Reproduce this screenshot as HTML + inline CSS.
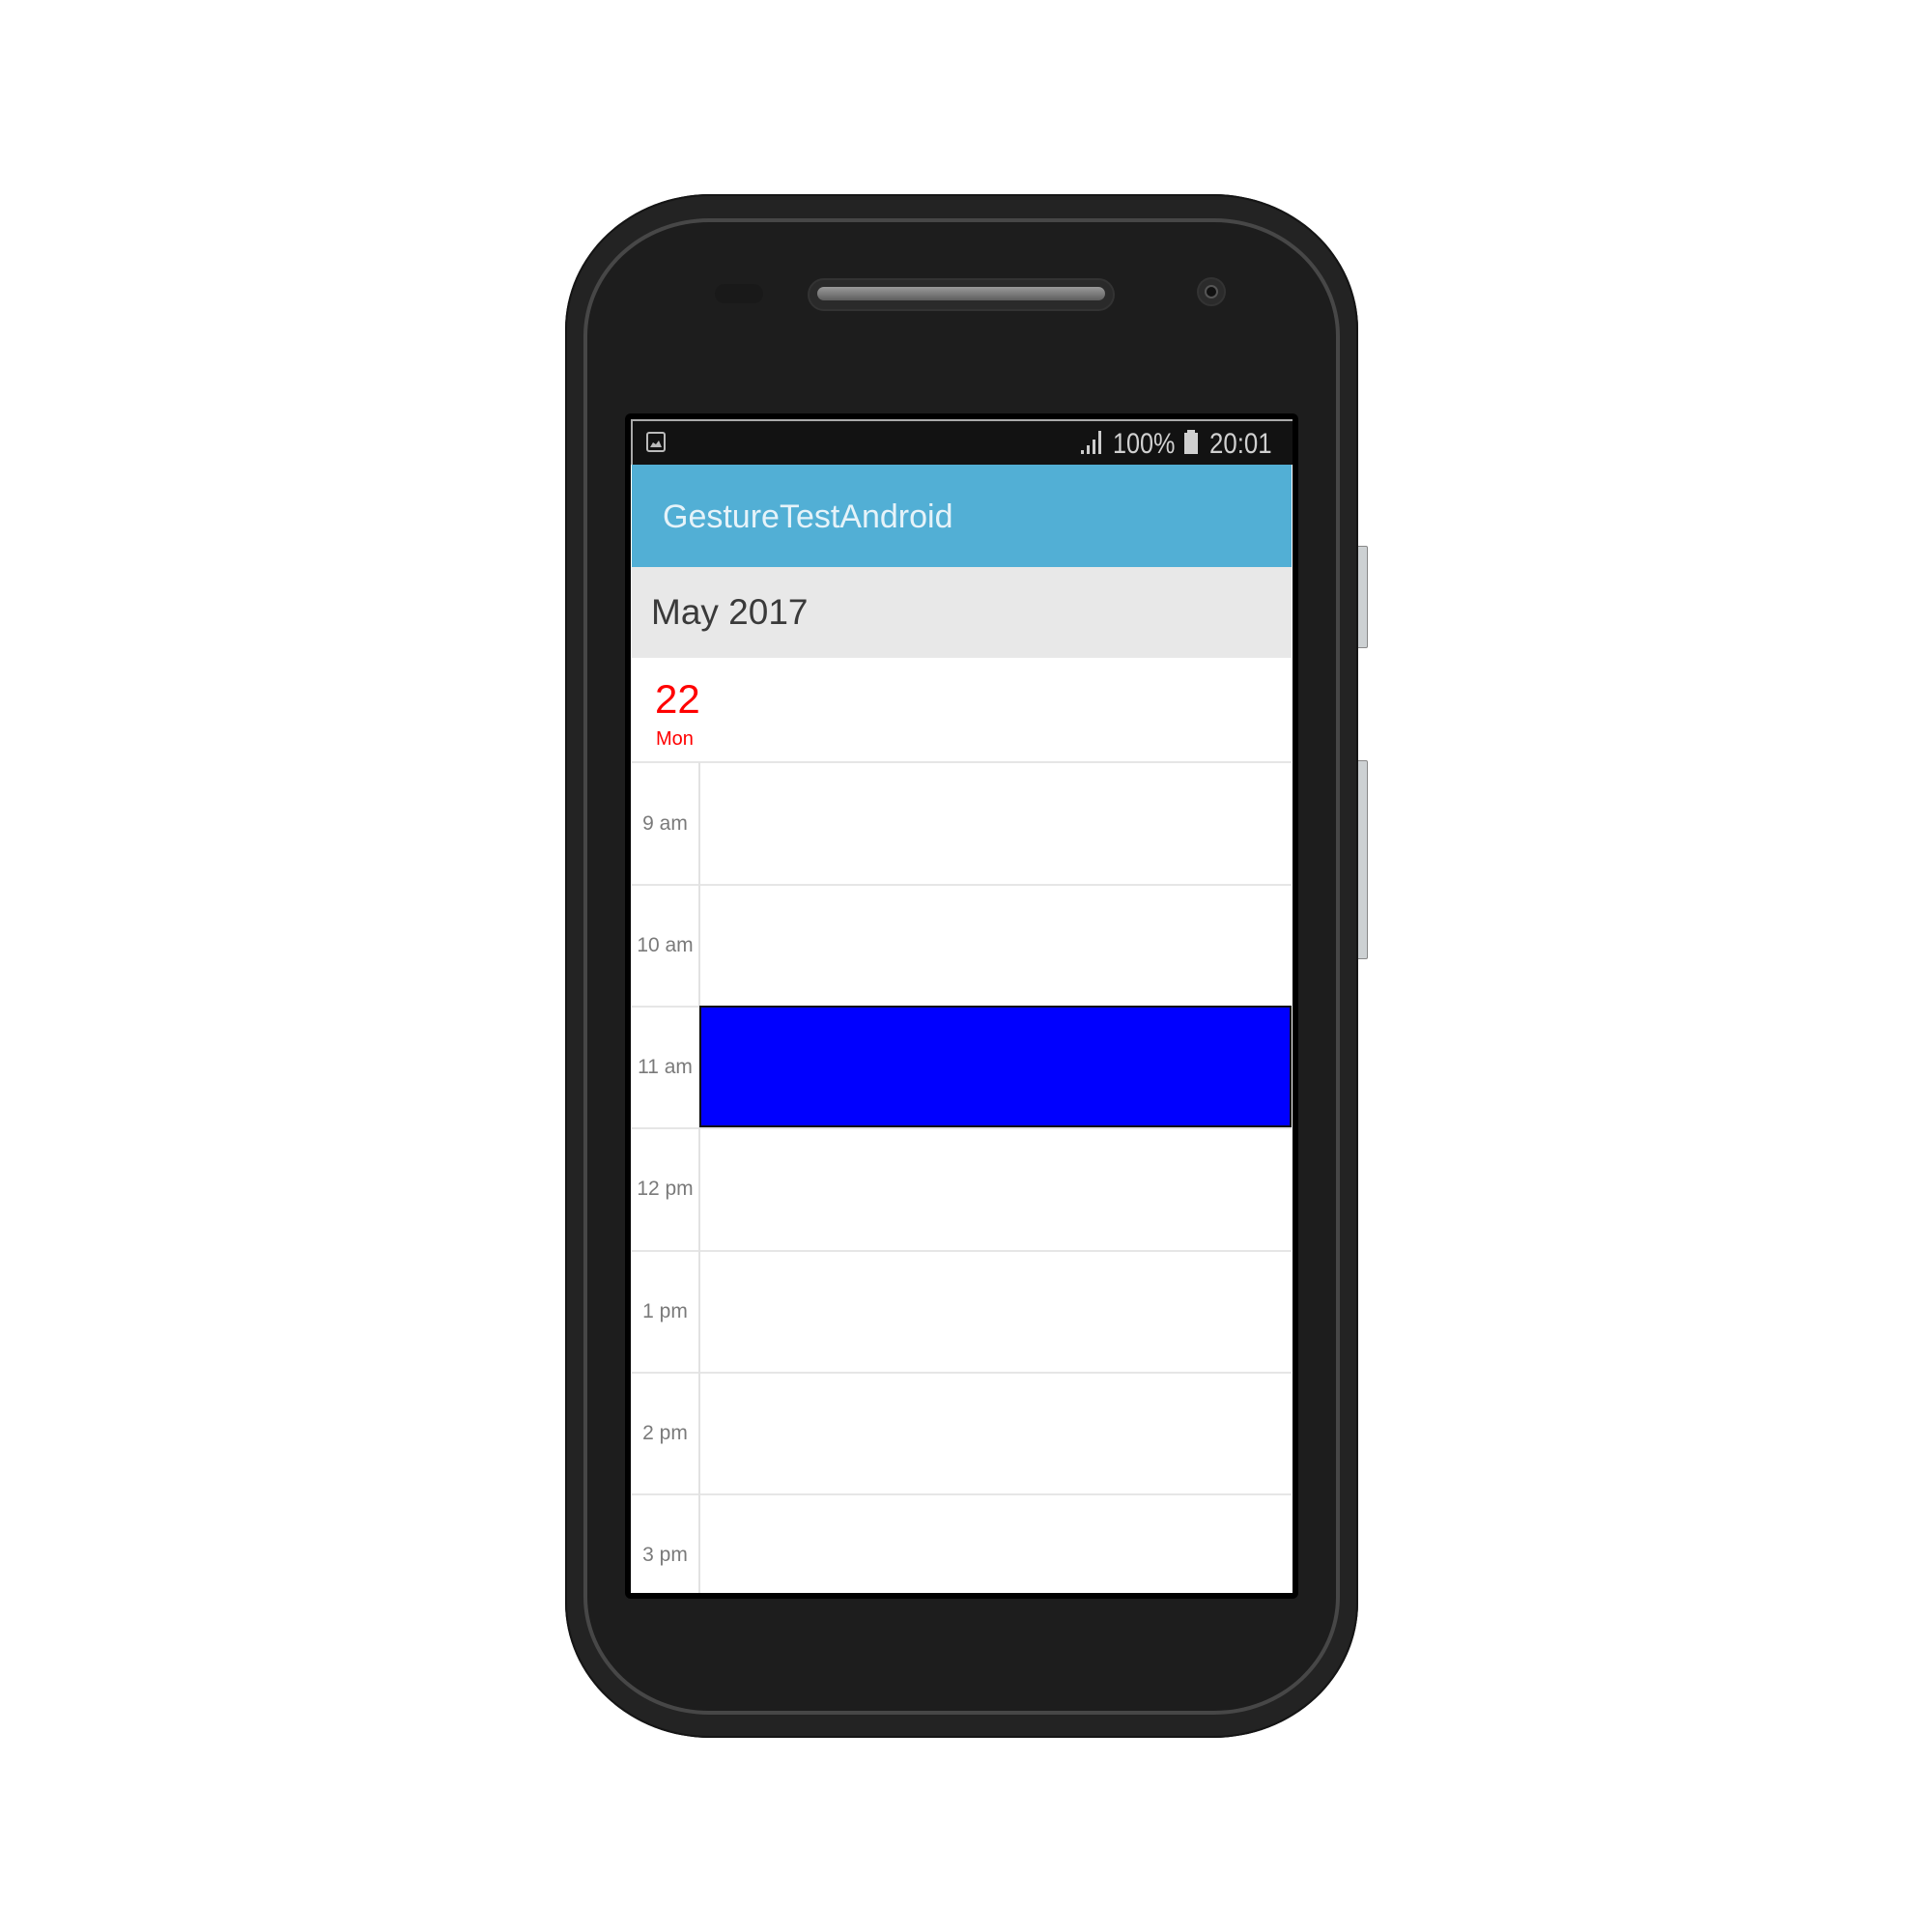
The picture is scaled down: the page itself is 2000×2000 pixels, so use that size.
<!DOCTYPE html>
<html><head><meta charset="utf-8"><style>
*{margin:0;padding:0;box-sizing:border-box}
body{width:2000px;height:2000px;background:#fff;position:relative;overflow:hidden;font-family:"Liberation Sans",sans-serif}
.a{position:absolute}
.t{position:absolute;white-space:nowrap;line-height:1}
.lbl{position:absolute;left:654px;width:69px;text-align:center;font-size:21px;color:#7a7a7a}
.hl{position:absolute;left:654px;width:683px;height:2px;background:#e6e6e6}
</style></head><body>
<div class="a" style="left:1403px;top:565px;width:13px;height:106px;background:#cdd1d3;border:1px solid #888;border-radius:2px"></div>
<div class="a" style="left:1403px;top:787px;width:13px;height:206px;background:#cdd1d3;border:1px solid #888;border-radius:2px"></div>
<div class="a" style="left:585px;top:201px;width:821px;height:1598px;background:#232323;border-radius:150px/140px;box-shadow:inset 0 0 0 2px #151515"></div>
<div class="a" style="left:604px;top:226px;width:783px;height:1549px;border-radius:130px/122px;border:4px solid #474747;background:#1d1d1d"></div>
<div class="a" style="left:740px;top:294px;width:50px;height:20px;border-radius:10px;background:#191919"></div>
<div class="a" style="left:836px;top:288px;width:318px;height:34px;border-radius:17px;background:#2a2a2a;border:2px solid #333"></div>
<div class="a" style="left:846px;top:297px;width:298px;height:14px;border-radius:7px;background:linear-gradient(#9a9a9a,#5e5e5e)"></div>
<div class="a" style="left:1239px;top:287px;width:30px;height:30px;border-radius:50%;background:#2b2b2b;border:2px solid #333"></div>
<div class="a" style="left:1247px;top:295px;width:14px;height:14px;border-radius:50%;background:#111;border:2px solid #555"></div>
<div class="a" style="left:647px;top:428px;width:697px;height:1227px;background:#000;border-radius:6px"></div>
<div class="a" style="left:653px;top:434px;width:685px;height:1215px;background:#fff;overflow:hidden">
</div>
<div class="a" style="left:653px;top:434px;width:685px;height:47px;background:#121212;border-top:2px solid #aaa;border-left:2px solid #aaa"></div>
<div class="a" style="left:669px;top:447px;width:20px;height:21px;border:2px solid #bbb;border-radius:3px"></div>
<svg class="a" style="left:672px;top:454px" width="14" height="10"><path d="M1 9 L4 4 L7 6 L10 2 L13 9Z" fill="#bbb"/></svg>
<svg class="a" style="left:1118px;top:445px" width="24" height="26"><path d="M1 25h3v-4h-3zM7 25h3v-9h-3zM13 25h3v-15h-3zM19 25h3v-24h-3z" fill="#ccc"/></svg>
<div class="t" style="left:1152px;top:445px;font-size:30px;color:#d0d0d0;transform:scaleX(0.84);transform-origin:0 0">100%</div>
<div class="a" style="left:1226px;top:448px;width:14px;height:22px;background:#d0d0d0"></div>
<div class="a" style="left:1229px;top:445px;width:8px;height:4px;background:#d0d0d0"></div>
<div class="t" style="left:1252px;top:445px;font-size:30px;color:#d0d0d0;transform:scaleX(0.86);transform-origin:0 0">20:01</div>
<div class="a" style="left:654px;top:481px;width:683px;height:106px;background:#52afd5"></div>
<div class="t" style="left:686px;top:518px;font-size:34px;color:#e6f3f9">GestureTestAndroid</div>
<div class="a" style="left:654px;top:587px;width:683px;height:94px;background:#e8e8e8"></div>
<div class="t" style="left:674px;top:615px;font-size:37px;color:#3a3a3a">May 2017</div>
<div class="t" style="left:678px;top:703px;font-size:42px;color:#ff0000">22</div>
<div class="t" style="left:679px;top:755px;font-size:20px;color:#ff0000">Mon</div>
<div class="hl" style="top:788px"></div>
<div class="hl" style="top:915px"></div>
<div class="hl" style="top:1041px"></div>
<div class="hl" style="top:1167px"></div>
<div class="hl" style="top:1294px"></div>
<div class="hl" style="top:1420px"></div>
<div class="hl" style="top:1546px"></div>
<div class="a" style="left:723px;top:789px;width:2px;height:860px;background:#e2e2e2"></div>
<div class="lbl" style="top:841px">9 am</div>
<div class="lbl" style="top:967px">10 am</div>
<div class="lbl" style="top:1093px">11 am</div>
<div class="lbl" style="top:1219px">12 pm</div>
<div class="lbl" style="top:1346px">1 pm</div>
<div class="lbl" style="top:1472px">2 pm</div>
<div class="lbl" style="top:1598px">3 pm</div>
<div class="a" style="left:724px;top:1041px;width:613px;height:126px;background:#0000ff;border:2px solid #111"></div>
</body></html>
